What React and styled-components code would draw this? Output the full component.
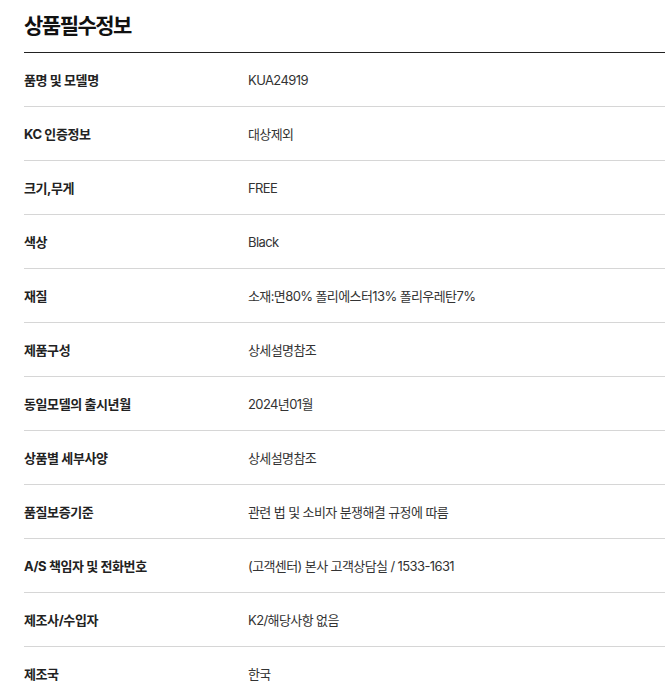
import React from "react";
import styled, { createGlobalStyle } from "styled-components";

const GlobalStyle = createGlobalStyle`
  body {
    margin: 0;
    background: #fff;
    font-family: Inter, "Noto Sans CJK KR", sans-serif;
    color: #222;
  }
`;

const rows = [
  ["품명 및 모델명", "KUA24919"],
  ["KC 인증정보", "대상제외"],
  ["크기,무게", "FREE"],
  ["색상", "Black"],
  ["재질", "소재:면80% 폴리에스터13% 폴리우레탄7%"],
  ["제품구성", "상세설명참조"],
  ["동일모델의 출시년월", "2024년01월"],
  ["상품별 세부사양", "상세설명참조"],
  ["품질보증기준", "관련 법 및 소비자 분쟁해결 규정에 따름"],
  ["A/S 책임자 및 전화번호", "(고객센터) 본사 고객상담실 / 1533-1631"],
  ["제조사/수입자", "K2/해당사항 없음"],
  ["제조국", "한국"],
];

function App() {
  return (
    <Wrap>
      <GlobalStyle />
      <Title>상품필수정보</Title>
      <Table>
        {rows.map(([label, value]) => (
          <Row key={label}>
            <Label>{label}</Label>
            <Value>{value}</Value>
          </Row>
        ))}
      </Table>
    </Wrap>
  );
}

const Wrap = styled.div`
  padding-left: 24px;
  overflow: hidden;
`;

const Title = styled.h2`
  margin: 0;
  height: 52px;
  display: flex;
  align-items: center;
  padding-bottom: 4px;
  box-sizing: border-box;
  font-size: 21px;
  font-weight: 700;
  letter-spacing: -1.5px;
  color: #111;
`;

const Table = styled.div`
  border-top: 1px solid #222;
`;

const Row = styled.div`
  display: grid;
  grid-template-columns: 224px 1fr;
  align-items: center;
  height: 53px;
  border-bottom: 1px solid #d6d6d6;
  font-size: 13px;
  letter-spacing: -0.4px;
`;

const Label = styled.div`
  font-weight: 700;
  color: #222;
`;

const Value = styled.div`
  font-weight: 400;
  color: #333;
  letter-spacing: -0.6px;
`;

export default App;
